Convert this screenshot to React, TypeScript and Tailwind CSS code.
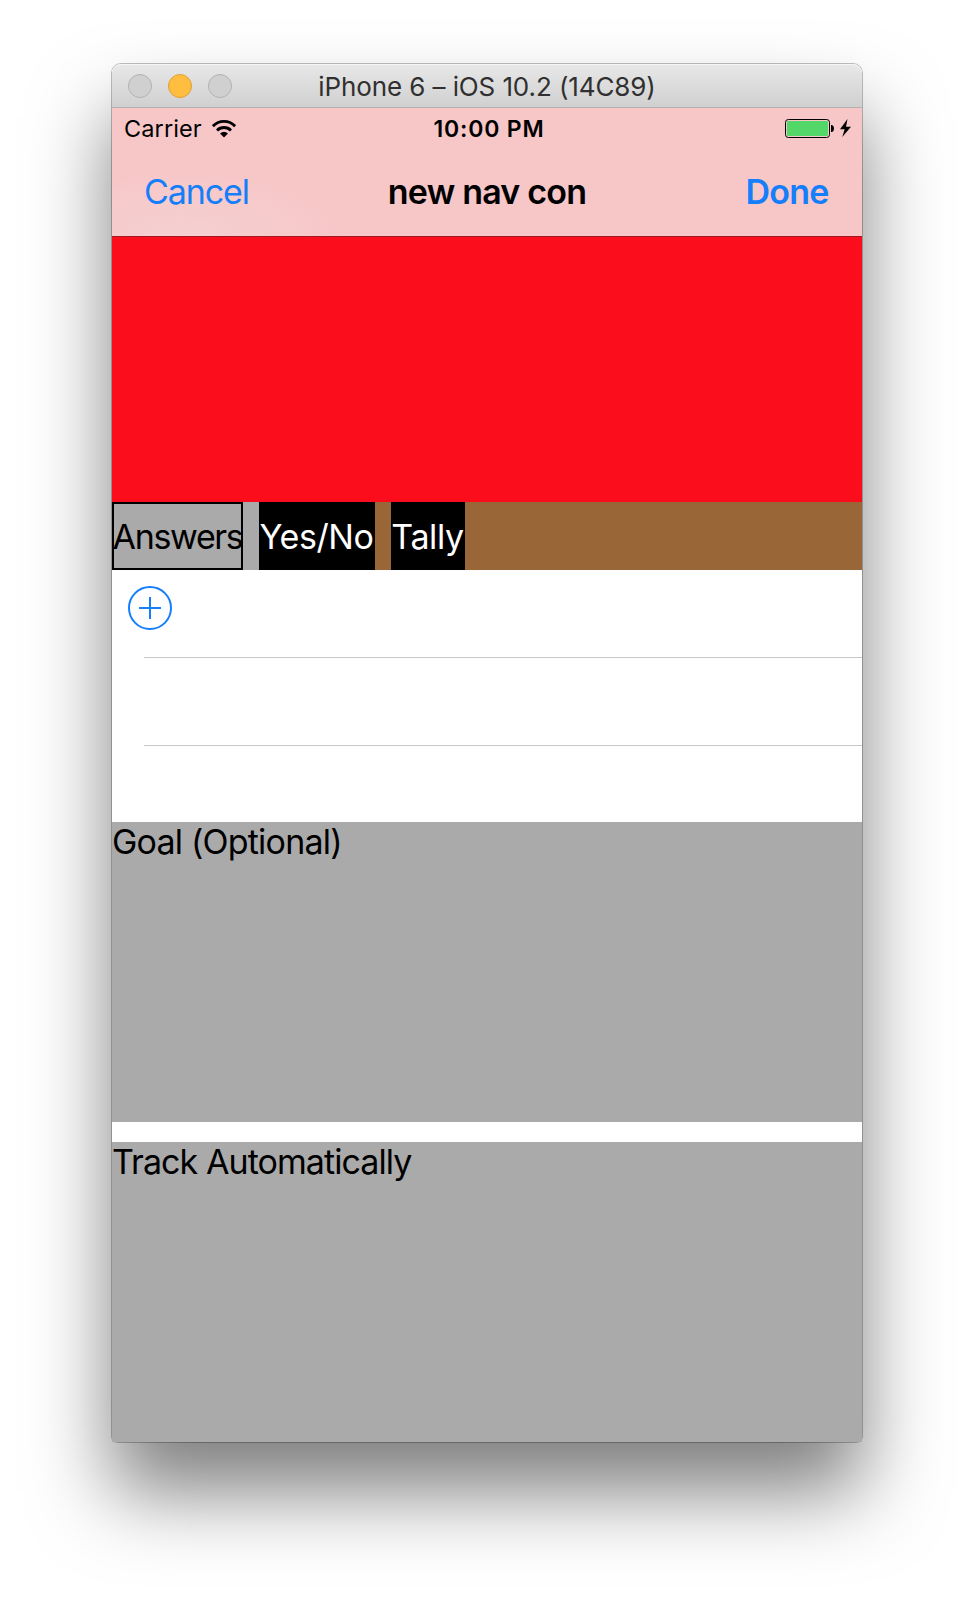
import React from "react";

function TitleBar() {
  return (
    <header className="relative flex h-11 shrink-0 items-center justify-center rounded-t-[9px] border-b border-[#b1b1b1] bg-linear-to-b from-[#e8e8e8] to-[#d0d0d0] shadow-[inset_0_1px_0_#f5f5f5]">
      <div className="absolute top-[10px] left-4 flex gap-4">
        <span className="size-6 rounded-full border border-[#b2b2b2] bg-[#d0d0d0]" />
        <span className="size-6 rounded-full border border-[#dfa033] bg-[#ffbe40]" />
        <span className="size-6 rounded-full border border-[#b2b2b2] bg-[#d0d0d0]" />
      </div>
      <h1 className="pt-0.5 text-[26px] leading-8 tracking-[-0.1px] text-[#303030]">
        iPhone 6 – iOS 10.2 (14C89)
      </h1>
    </header>
  );
}

function WifiIcon() {
  return (
    <svg className="h-[18px] w-6" viewBox="0 0 24 18" fill="none" stroke="#000">
      <path d="M0.9 6.2C7-0.2 17-0.2 23.1 6.2" strokeWidth="2.8" />
      <path d="M5 10.4C8.9 6.5 15.1 6.5 19 10.4" strokeWidth="2.8" />
      <path d="M8 13.5Q12 10.1 16 13.5L12 17.6Z" fill="#000" stroke="none" />
    </svg>
  );
}

function BatteryIcon() {
  return (
    <svg className="h-[19px] w-[67px]" viewBox="0 0 67 19">
      <rect x="0.5" y="0.5" width="44" height="18" rx="2.8" fill="none" stroke="#000" />
      <rect x="2" y="2" width="41" height="15" rx="1.2" fill="#53d769" />
      <path d="M46 6h1q2 .5 2 3.5t-2 3.5h-1z" fill="#000" />
      <path d="M62.5 0L55 10.3h4.6L57.3 18 66 7.7h-5z" fill="#000" />
    </svg>
  );
}

function StatusBar() {
  return (
    <div className="grid h-10 grid-cols-3 items-center pt-0.5 leading-8">
      <div className="flex items-center gap-2.5 pl-3">
        <span className="text-[23.5px] tracking-[0.1px]">Carrier</span>
        <WifiIcon />
      </div>
      <span className="pl-1 text-center text-[23px] font-semibold tracking-[0.85px]">10:00 PM</span>
      <div className="flex justify-end pr-2.5 pb-0.5">
        <BatteryIcon />
      </div>
    </div>
  );
}

function NavBar() {
  return (
    <nav className="grid h-[88px] grid-cols-3 items-center px-8 text-[34px] leading-10 tracking-[-0.8px]">
      <button className="text-left tracking-[-1.1px] text-[#157efb]">Cancel</button>
      <h2 className="text-center font-semibold whitespace-nowrap">new nav con</h2>
      <button className="pr-[1.5px] text-right font-semibold text-[#157efb]">Done</button>
    </nav>
  );
}

function Tabs() {
  return (
    <div className="flex h-[68px] shrink-0 bg-[#996638] text-[34px] tracking-[-0.4px]">
      <div className="flex bg-[#aaaaaa] pr-4">
        <button className="flex w-[131px] items-center justify-center border-2 border-black tracking-[-1.35px] whitespace-nowrap">
          Answers
        </button>
      </div>
      <button className="mr-4 flex w-[116px] items-center justify-center bg-black pr-px text-white">Yes/No</button>
      <button className="flex w-[74px] items-center justify-center bg-black pr-px text-white">Tally</button>
    </div>
  );
}

function AnswerTable() {
  return (
    <div className="h-[252px] shrink-0 bg-white pl-8">
      <div className="h-22 border-b border-[#c8c7cc] pt-4">
        <svg className="-ml-4 size-11" viewBox="0 0 44 44" fill="none" stroke="#157efb" strokeWidth="2">
          <circle cx="22" cy="22" r="21" />
          <path d="M11 22h22M22 11v22" />
        </svg>
      </div>
      <div className="h-22 border-b border-[#c8c7cc]" />
    </div>
  );
}

export default function App() {
  return (
    <main className="h-[1602px] w-[974px] overflow-hidden bg-white pt-16 pl-28 font-['Inter',sans-serif] text-black">
      <div className="flex w-[750px] flex-col rounded-t-[9px] rounded-b-[6px] shadow-[0_0_0_1px_rgba(0,0,0,0.25),0_50px_80px_rgba(0,0,0,0.5)]">
        <TitleBar />
        <div className="h-[129px] shrink-0 border-b border-[#a01820] bg-[#f7c6c7] bg-[radial-gradient(ellipse_170px_70px_at_70px_128px,#f5d0d1,#f7c6c7)]">
          <StatusBar />
          <NavBar />
        </div>
        <div className="h-[265px] shrink-0 bg-[#fc0d1b]" />
        <Tabs />
        <AnswerTable />
        <div className="flex flex-col gap-5 bg-white text-[34px] leading-[40px] tracking-[-0.8px]">
          <section className="h-[300px] bg-[#aaaaaa]">Goal (Optional)</section>
          <section className="h-[300px] bg-[#aaaaaa] tracking-[-0.93px]">Track Automatically</section>
        </div>
      </div>
    </main>
  );
}
